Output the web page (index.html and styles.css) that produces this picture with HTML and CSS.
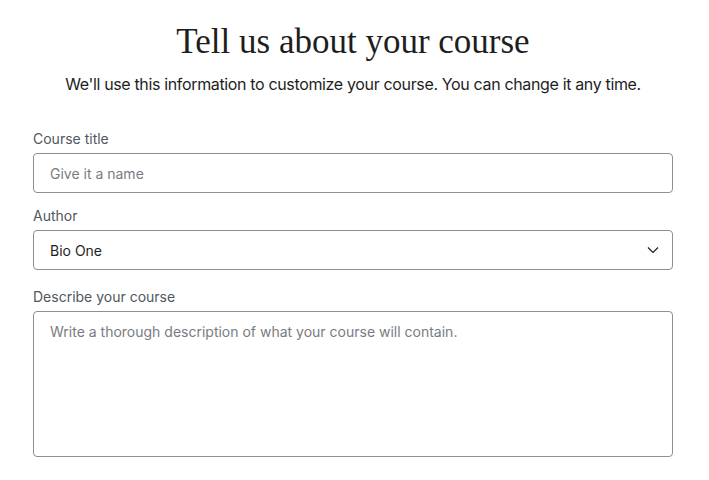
FILE: index.html
```html
<!DOCTYPE html>
<html lang="en">
<head>
    <meta charset="UTF-8">
    <meta name="viewport" content="width=device-width, initial-scale=1.0">
    <title>Tell us about your course</title>
    <link rel="stylesheet" href="styles.css">
</head>
<body>
    <div class="container">
        <h1>Tell us about your course</h1>
        <p class="intro">We'll use this information to customize your course. You can change it any time.</p>

        <form class="course-form">
            <div class="form-group">
                <label for="title">Course title</label>
                <input type="text" id="title" class="field" placeholder="Give it a name">
            </div>

            <div class="form-group">
                <label for="author">Author</label>
                <div class="select-wrap">
                    <select id="author" class="field">
                        <option>Bio One</option>
                    </select>
                    <svg class="chevron" width="12" height="8" viewBox="0 0 12 8" fill="none">
                        <path d="M1 1.5l5 5 5-5" stroke="#1e1e1e" stroke-width="1.2"/>
                    </svg>
                </div>
            </div>

            <div class="form-group form-group-last">
                <label for="desc">Describe your course</label>
                <textarea id="desc" class="field area" placeholder="Write a thorough description of what your course will contain."></textarea>
            </div>
        </form>
    </div>
</body>
</html>
```

FILE: styles.css
```css
body {
    margin: 0;
    background: #fff;
    font-family: Inter, "Liberation Sans", Arial, sans-serif;
    color: #1e1e1e;
}
.container {
    width: 640px;
    margin: 0 0 0 33px;
    padding-top: 22px;
}
h1 {
    font-family: "Liberation Serif", "Times New Roman", serif;
    font-weight: 400;
    font-size: 35px;
    line-height: 40px;
    text-align: center;
    margin: 0;
    color: #1e1e1e;
}
.intro {
    font-size: 16px;
    line-height: 24px;
    letter-spacing: -0.35px;
    text-align: center;
    margin: 10px 0 33px;
    color: #1e1e1e;
}
.form-group {
    margin-bottom: 13px;
}
.form-group-last {
    margin-top: 17px;
}
label {
    display: block;
    font-size: 14px;
    line-height: 20px;
    color: #50575e;
    margin-bottom: 4px;
}
.field {
    display: block;
    width: 100%;
    box-sizing: border-box;
    height: 40px;
    padding: 0 16px;
    border: 1px solid #8c8f94;
    border-radius: 4px;
    background: #fff;
    font-family: Inter, "Liberation Sans", Arial, sans-serif;
    font-size: 14px;
    color: #1e1e1e;
    outline: none;
}
.field::placeholder {
    color: #787c82;
}
.select-wrap {
    position: relative;
}
select.field {
    appearance: none;
    -webkit-appearance: none;
}
.chevron {
    position: absolute;
    right: 14px;
    top: 16px;
    pointer-events: none;
}
.area {
    height: 146px;
    padding: 10px 16px;
    resize: none;
    line-height: 20px;
}
```
